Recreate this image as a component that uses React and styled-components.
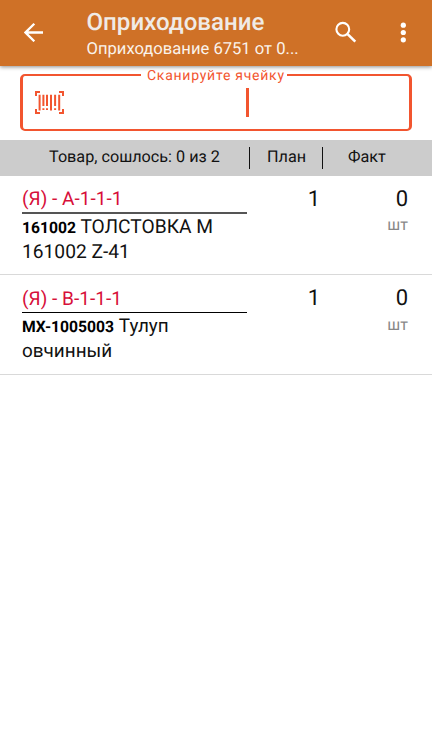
import React from "react";
import styled, { createGlobalStyle } from "styled-components";

const GlobalStyle = createGlobalStyle`
  * { box-sizing: border-box; }
  body {
    margin: 0;
    background: #fff;
    color: #111;
    font-family: Roboto, "Noto Sans", sans-serif;
    text-rendering: geometricPrecision;
  }
`;

const Screen = styled.div`
  display: flex;
  flex-direction: column;
  width: 432px;
  height: 738px;
  overflow: hidden;
  background: #fff;
`;

const AppBar = styled.header`
  display: flex;
  flex: none;
  height: 66px;
  padding-left: 24px;
  background: #cf7127;
  box-shadow: 0 1px 4px rgba(0, 0, 0, 0.45);
`;

const IconButton = styled.button`
  display: flex;
  flex: none;
  width: ${(p) => p.$width}px;
  height: 66px;
  padding: ${(p) => p.$top}px 0 0;
  border: 0;
  background: none;
  color: #fff;
`;

const Titles = styled.div`
  flex: none;
  width: 248px;
  padding-top: 7px;
`;

const Title = styled.h1`
  margin: 0;
  font-size: 24.1px;
  font-weight: 500;
  line-height: 30px;
  color: #f0ebe6;
  white-space: nowrap;
`;

const Subtitle = styled.div`
  font-size: 16.6px;
  line-height: 26px;
  color: #faf3ec;
  white-space: nowrap;
`;

const ScanField = styled.fieldset`
  display: block;
  flex: none;
  height: 63px;
  min-width: 0;
  margin: 2px 20px 9px;
  padding: 0;
  border: solid #f2552f;
  border-width: 2px 3px;
  border-radius: 5px;
`;

const ScanLabel = styled.legend`
  height: 14px;
  margin: 0 0 0 118px;
  padding: 0 2px 0 6px;
  font-size: 14px;
  line-height: 16px;
  letter-spacing: 0.75px;
  color: #f2552f;
  white-space: nowrap;
`;

const ScanInput = styled.div`
  display: flex;
  justify-content: space-between;
  padding: 6px 160px 0 11px;
`;

const Barcode = styled.svg`
  display: block;
  margin-top: 2px;
`;

const Caret = styled.span`
  width: 3px;
  height: 29px;
  background: #f2552f;
`;

const TableHead = styled.div`
  display: flex;
  flex: none;
  align-items: center;
  height: 36px;
  background: #ccc;
  font-size: 16.2px;
  line-height: 20px;
  white-space: nowrap;
`;

const HeadCell = styled.div`
  width: ${(p) => p.$width}px;
  padding-left: ${(p) => p.$indent}px;
  padding-bottom: 2px;
`;

const Separator = styled.span`
  width: 1px;
  height: 22px;
  background: #111;
`;

const Row = styled.article`
  display: flex;
  flex: none;
  height: ${(p) => p.$height}px;
  padding: 10px 24px 0 22px;
  border-bottom: 1px solid #d9d9d9;
`;

const Product = styled.div`
  width: 225px;
`;

const CellCode = styled.div`
  height: 28px;
  border-bottom: ${(p) => p.$rule};
  font-size: 19.1px;
  line-height: ${(p) => p.$line}px;
  color: #d70f3a;
`;

const Name = styled.div`
  width: 205px;
  font-size: ${(p) => p.$size}px;
  line-height: 25px;
`;

const Sku = styled.b`
  font-size: ${(p) => p.$size}px;
  font-weight: 700;
  line-height: 1;
  color: #000;
`;

const Amount = styled.div`
  width: ${(p) => p.$width}px;
  font-size: 22px;
  line-height: ${(p) => p.$line}px;
  text-align: right;
`;

const Unit = styled.div`
  font-size: 16px;
  line-height: 24px;
  color: #888;
`;

const rows = [
  { cell: "(Я) - A-1-1-1", sku: "161002", name: "ТОЛСТОВКА М 161002 Z-41", plan: 1, fact: 0, height: 99, line: 26, skuSize: 15.7, nameSize: 19.2, rule: "2px solid #555" },
  { cell: "(Я) - B-1-1-1", sku: "MX-1005003", name: "Тулуп овчинный", plan: 1, fact: 0, height: 100, line: 27, skuSize: 15.7, nameSize: 18.9, rule: "1px solid #000" },
];

const BarcodeIcon = () => (
  <Barcode width="31" height="25" viewBox="0 0 31 25" fill="#f2552f">
    <path d="M1 6V1h5v2H3v3zM25 1h5v5h-2V3h-3zM1 19h2v3h3v2H1zM28 19h2v5h-5v-2h3z" />
    <path d="M4.600 4.700h2v15.800h-2zM8.400 4.700h2V16h-2zM12 4.700h2V16h-2zM16 4.700h2v15.800h-2zM20.100 4.700h2V16h-2zM24.200 4.700h2v15.800h-2zM8.400 18.200h2V20h-2zM12 18.200h2V20h-2zM20.100 18.200h2V20h-2z" />
  </Barcode>
);

export default function App() {
  return (
    <Screen>
      <GlobalStyle />
      <AppBar>
        <IconButton $width={62.5} $top={22} aria-label="Назад">
          <svg width="20" height="20" viewBox="0 0 20 20" fill="none" stroke="#fff" strokeWidth="2.3">
            <path d="M19 10.500H2M10.300 1.700L1.500 10.500l8.800 8.800" />
          </svg>
        </IconButton>
        <Titles>
          <Title>Оприходование</Title>
          <Subtitle>Оприходование 6751 от 0...</Subtitle>
        </Titles>
        <IconButton $width={64} $top={21} aria-label="Поиск">
          <svg width="22" height="22" viewBox="0 0 22 22" fill="none" stroke="#fff">
            <circle cx="7.800" cy="8.300" r="6.400" strokeWidth="2.100" />
            <path d="M12.600 13.100l7.700 7.500" strokeWidth="2.600" />
          </svg>
        </IconButton>
        <IconButton $width={20} $top={22} aria-label="Меню">
          <svg width="8" height="22" viewBox="0 0 8 22" fill="#fff">
            <circle cx="4.300" cy="3.200" r="2.600" />
            <circle cx="4.300" cy="10.500" r="2.600" />
            <circle cx="4.300" cy="17.800" r="2.600" />
          </svg>
        </IconButton>
      </AppBar>
      <ScanField>
        <ScanLabel>Сканируйте ячейку</ScanLabel>
        <ScanInput>
          <BarcodeIcon />
          <Caret />
        </ScanInput>
      </ScanField>
      <TableHead>
        <HeadCell $width={249} $indent={49}>Товар, сошлось: 0 из 2</HeadCell>
        <Separator />
        <HeadCell $width={72} $indent={17}>План</HeadCell>
        <Separator />
        <HeadCell $width={109} $indent={25}>Факт</HeadCell>
      </TableHead>
      {rows.map((r) => (
        <Row key={r.sku} $height={r.height}>
          <Product>
            <CellCode $rule={r.rule} $line={r.line}>{r.cell}</CellCode>
            <Name $size={r.nameSize}><Sku $size={r.skuSize}>{r.sku}</Sku> {r.name}</Name>
          </Product>
          <Amount $width={73} $line={r.line + 1}>{r.plan}</Amount>
          <Amount $width={88} $line={r.line + 1}>
            {r.fact}
            <Unit>шт</Unit>
          </Amount>
        </Row>
      ))}
    </Screen>
  );
}
